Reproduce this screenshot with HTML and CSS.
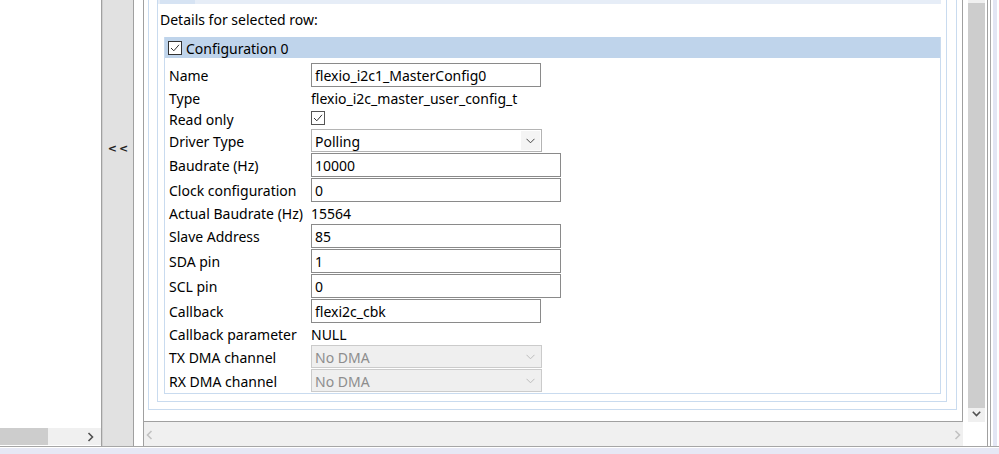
FILE: index.html
```html
<!DOCTYPE html>
<html>
<head>
<meta charset="utf-8">
<link rel="stylesheet" href="styles.css">
</head>
<body>
<div class="window">
  <div class="main">
    <div class="left-panel">
      <div class="left-content"></div>
      <div class="left-hscroll">
        <div class="lh-thumb"></div>
        <div class="lh-rest">
          <svg class="chev" width="7" height="10" viewBox="0 0 7 10"><polyline points="1.5,1 5.5,5 1.5,9" fill="none" stroke="#505050" stroke-width="1.6"/></svg>
        </div>
      </div>
    </div>
    <div class="sash"><span class="sash-label">&lt;&lt;</span></div>
    <div class="gap"></div>
    <div class="scroller">
      <div class="viewport">
        <div class="box1">
          <div class="box2">
            <div class="topstrip"><div class="toptab"></div></div>
            <div class="details-title">Details for selected row:</div>
            <div class="group">
              <div class="group-header">
                <svg class="cb" width="14" height="14" viewBox="0 0 14 14"><rect x="0.5" y="0.5" width="13" height="13" fill="#fff" stroke="#333"/><polyline points="3,7 5.8,9.8 11,3.8" fill="none" stroke="#333" stroke-width="1"/></svg>
                <span class="group-title">Configuration 0</span>
              </div>
              <div class="form">
                <div class="row r-input"><div class="label">Name</div><div class="field w230">flexio_i2c1_MasterConfig0</div></div>
                <div class="row r-text"><div class="label">Type</div><div class="value">flexio_i2c_master_user_config_t</div></div>
                <div class="row r-check"><div class="label">Read only</div><svg class="cb ro" width="14" height="14" viewBox="0 0 14 14"><rect x="0.5" y="0.5" width="13" height="13" fill="#fff" stroke="#555"/><polyline points="3,7 5.8,9.8 11,3.8" fill="none" stroke="#333" stroke-width="1"/></svg></div>
                <div class="row r-select"><div class="label">Driver Type</div><div class="select"><span class="sel-text">Polling</span><span class="sel-btn"><svg width="9" height="6" viewBox="0 0 9 6"><polyline points="0.5,0.8 4.5,4.8 8.5,0.8" fill="none" stroke="#444" stroke-width="1"/></svg></span></div></div>
                <div class="row r-input"><div class="label">Baudrate (Hz)</div><div class="field w250">10000</div></div>
                <div class="row r-input"><div class="label">Clock configuration</div><div class="field w250">0</div></div>
                <div class="row r-text"><div class="label">Actual Baudrate (Hz)</div><div class="value">15564</div></div>
                <div class="row r-input"><div class="label">Slave Address</div><div class="field w250">85</div></div>
                <div class="row r-input"><div class="label">SDA pin</div><div class="field w250">1</div></div>
                <div class="row r-input"><div class="label">SCL pin</div><div class="field w250">0</div></div>
                <div class="row r-input"><div class="label">Callback</div><div class="field w230">flexi2c_cbk</div></div>
                <div class="row r-text"><div class="label">Callback parameter</div><div class="value">NULL</div></div>
                <div class="row r-select"><div class="label">TX DMA channel</div><div class="select disabled"><span class="sel-text">No DMA</span><span class="sel-btn"><svg width="9" height="6" viewBox="0 0 9 6"><polyline points="0.5,0.8 4.5,4.8 8.5,0.8" fill="none" stroke="#bdbdbd" stroke-width="1"/></svg></span></div></div>
                <div class="row r-select"><div class="label">RX DMA channel</div><div class="select disabled"><span class="sel-text">No DMA</span><span class="sel-btn"><svg width="9" height="6" viewBox="0 0 9 6"><polyline points="0.5,0.8 4.5,4.8 8.5,0.8" fill="none" stroke="#bdbdbd" stroke-width="1"/></svg></span></div></div>
              </div>
            </div>
          </div>
        </div>
      </div>
      <div class="vscroll">
        <div class="vtrack">
          <div class="vthumb"></div>
          <div class="varrow"><svg width="9" height="6" viewBox="0 0 9 6"><polyline points="0.8,0.8 4.5,4.6 8.2,0.8" fill="none" stroke="#505050" stroke-width="1.6"/></svg></div>
        </div>
      </div>
      <div class="hscroll">
        <svg width="7" height="10" viewBox="0 0 7 10"><polyline points="5.5,1 1.5,5 5.5,9" fill="none" stroke="#c2c2c2" stroke-width="1.6"/></svg>
        <svg width="7" height="10" viewBox="0 0 7 10"><polyline points="1.5,1 5.5,5 1.5,9" fill="none" stroke="#c2c2c2" stroke-width="1.6"/></svg>
      </div>
      <div class="corner"></div>
    </div>
    <div class="right-edge"></div>
  </div>
  <div class="bottom-edge"></div>
</div>
</body>
</html>
```

FILE: styles.css
```css
* { box-sizing: border-box; }
html, body { margin: 0; padding: 0; }
body {
  width: 999px;
  height: 454px;
  overflow: hidden;
  background: #fff;
  font-family: "Noto Sans", "Open Sans", sans-serif;
  font-size: 14px;
  color: #000;
}
.window { display: flex; flex-direction: column; height: 454px; }
.main {
  display: flex;
  height: 447px;
  border-bottom: 1px solid #a6a6a6;
}

/* left panel */
.left-panel {
  width: 102px;
  border-right: 1px solid #a0a0a0;
  display: flex;
  flex-direction: column;
}
.left-content { flex: 1; }
.left-hscroll {
  height: 17px;
  margin-bottom: 1px;
  display: flex;
  background: #f0f0f0;
}
.lh-thumb { width: 48px; background: #cdcdcd; }
.lh-rest {
  flex: 1;
  display: flex;
  align-items: center;
  justify-content: flex-end;
  padding-right: 7px;
}

/* sash column */
.sash {
  width: 32px;
  background: #e1e1e1;
  border-left: 1px solid #cfcfcf;
  border-right: 1px solid #a0a0a0;
  display: flex;
  justify-content: center;
  padding: 139px 0 0 2px;
}
.sash-label {
  font-family: "DejaVu Sans", sans-serif;
  font-size: 11px;
  font-weight: bold;
  line-height: 20px;
  height: 20px;
  letter-spacing: 2px;
  color: #222;
}
.gap { width: 9px; }

/* scroller */
.scroller {
  width: 845px;
  display: grid;
  grid-template-columns: 819px 24px;
  grid-template-rows: 422px 24px;
  border-left: 1px solid #a0a0a0;
  border-right: 1px solid #a0a0a0;
}
.viewport {
  border-right: 1px solid #a0a0a0;
  border-bottom: 1px solid #a0a0a0;
  overflow: hidden;
  padding: 0 5px 11px 4px;
}
.box1 {
  border-left: 1px solid #c9dbef;
  border-right: 1px solid #c9dbef;
  border-bottom: 1px solid #c9dbef;
  padding: 0 9px 7px 8px;
}
.box2 {
  border-left: 1px solid #c9dbef;
  border-right: 1px solid #c9dbef;
  border-bottom: 1px solid #c9dbef;
  padding: 0 5px 7px 0;
}
.topstrip {
  height: 4px;
  background: #e6edf7;
}
.toptab {
  margin-left: 2px;
  width: 35px;
  height: 4px;
  background: #d6e3f3;
}
.details-title {
  padding: 6px 0 7px 2px;
  line-height: 20px;
  height: 33px;
}
.group {
  margin-left: 6px;
  border-left: 1px solid #c9dbef;
  border-right: 1px solid #c9dbef;
  border-bottom: 1px solid #c9dbef;
}
.group-header {
  height: 21px;
  background: #bfd4eb;
  display: flex;
  align-items: center;
  padding-left: 3px;
  gap: 4px;
}
.group-title { line-height: 21px; padding-top: 1px; }
.cb { display: block; flex: none; }

.form {
  padding: 5px 0 0 4px;
}
.row {
  display: flex;
  align-items: flex-start;
}
.label {
  width: 142px;
  flex: none;
  white-space: nowrap;
  padding-top: 1px;
}
.value { padding-top: 1px; }
.r-input { height: 25px; }
.r-input .label { line-height: 24px; }
.r-text { height: 21px; }
.r-text .label, .r-text .value { line-height: 20px; }
.r-check { height: 20px; }
.r-check .label { line-height: 19px; }
.r-check .ro { margin-top: 2px; }
.r-select { height: 24px; }
.r-select .label { line-height: 23px; }

.field {
  height: 24px;
  border: 1px solid #8a8a8a;
  background: #fff;
  padding: 1px 0 0 3px;
  line-height: 22px;
  white-space: nowrap;
}
.w230 { width: 230px; }
.w250 { width: 250px; }

.select {
  width: 231px;
  height: 23px;
  border: 1px solid #b4b4b4;
  background: #fff;
  display: flex;
  justify-content: space-between;
  padding-left: 3px;
  line-height: 21px;
}
.sel-text { padding-top: 1px; }
.sel-btn {
  width: 19px;
  margin: 1px 1px 1px 0;
  background: #f4f4f4;
  display: flex;
  align-items: center;
  justify-content: center;
}
.select.disabled {
  background: #efefef;
  border-color: #cbcbcb;
  color: #8d8d8d;
}
.select.disabled .sel-btn { background: #efefef; }

/* vertical scrollbar */
.vscroll {
  padding: 0 2px 0 5px;
}
.vtrack {
  height: 422px;
  background: #f0f0f0;
  display: flex;
  flex-direction: column;
}
.vthumb {
  margin-top: 3px;
  height: 405px;
  background: #cdcdcd;
}
.varrow {
  flex: 1;
  display: flex;
  align-items: center;
  justify-content: center;
  padding-bottom: 2px;
}

/* horizontal scrollbar */
.hscroll {
  background: #f0f0f0;
  display: flex;
  justify-content: space-between;
  align-items: center;
  padding: 2px 2px 0 2px;
}
.corner { background: #fff; }

.right-edge {
  width: 11px;
  background: linear-gradient(to right, #fff 0 2px, #a8a8a8 2px 3px, #fff 3px 5px, #e3e6f4 5px 9px, #fff 9px);
}
.bottom-edge {
  flex: 1;
  border-top: 1px solid #fff;
  background: #e6e8f5;
}
```
